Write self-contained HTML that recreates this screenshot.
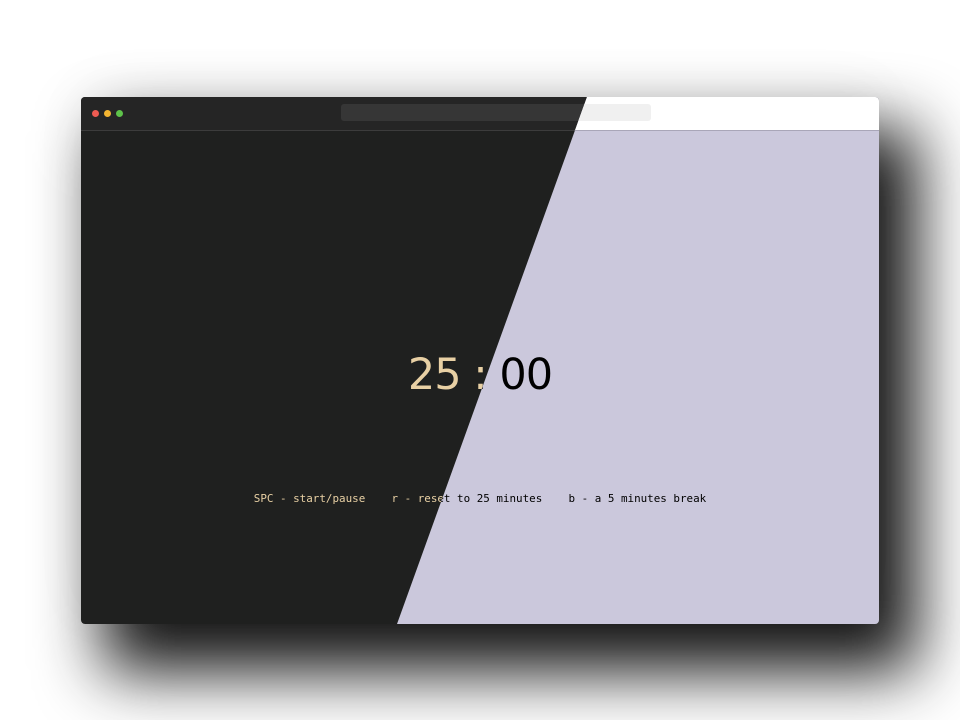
<!DOCTYPE html>
<html><head><style>
html,body{margin:0;padding:0;width:960px;height:720px;background:#fff;overflow:hidden}
.win{position:absolute;left:81px;top:97px;width:798px;height:527px;border-radius:4px;box-shadow:30px 40px 65px 8px rgba(0,0,0,.92),0 -10px 60px rgba(0,0,0,.04);overflow:hidden}
.layer{position:absolute;inset:0}
.tb{position:absolute;left:0;top:0;width:100%;height:33px;border-bottom:1px solid}
.url{position:absolute;left:260px;top:7px;width:310px;height:17px;border-radius:3px}
.dot{position:absolute;top:13px;width:7px;height:7px;border-radius:50%}
.timer{position:absolute;left:0;width:100%;top:250px;text-align:center;font-family:"DejaVu Sans","Liberation Sans",sans-serif;font-size:43px;letter-spacing:-1px;line-height:56px}
.help{position:absolute;left:0;width:100%;top:395px;text-align:center;font-family:"DejaVu Sans Mono","Liberation Mono",monospace;font-size:10.9px;white-space:pre}
.dark{background:#1f201f}
.dark .tb{background:#252525;border-color:#3c3c3c}
.dark .url{background:#363636}
.dark .timer,.dark .help{color:#e8d0a4}
.light{background:#cbc8dc;clip-path:polygon(506px 0,100% 0,100% 100%,316px 100%)}
.light .tb{background:#fff;border-color:#a9a6b8}
.light .url{background:#f0f0f0}
.light .timer,.light .help{color:#000}
</style></head><body>
<div class="win">
 <div class="layer dark">
  <div class="tb"><div class="dot" style="left:11px;background:#ee5b52"></div><div class="dot" style="left:23px;background:#f3b531"></div><div class="dot" style="left:35px;background:#5ec34a"></div><div class="url"></div></div>
  <div class="timer">25 : 00</div>
  <div class="help">SPC - start/pause    r - reset to 25 minutes    b - a 5 minutes break</div>
 </div>
 <div class="layer light">
  <div class="tb"><div class="url"></div></div>
  <div class="timer">25 : 00</div>
  <div class="help">SPC - start/pause    r - reset to 25 minutes    b - a 5 minutes break</div>
 </div>
</div>
</body></html>
